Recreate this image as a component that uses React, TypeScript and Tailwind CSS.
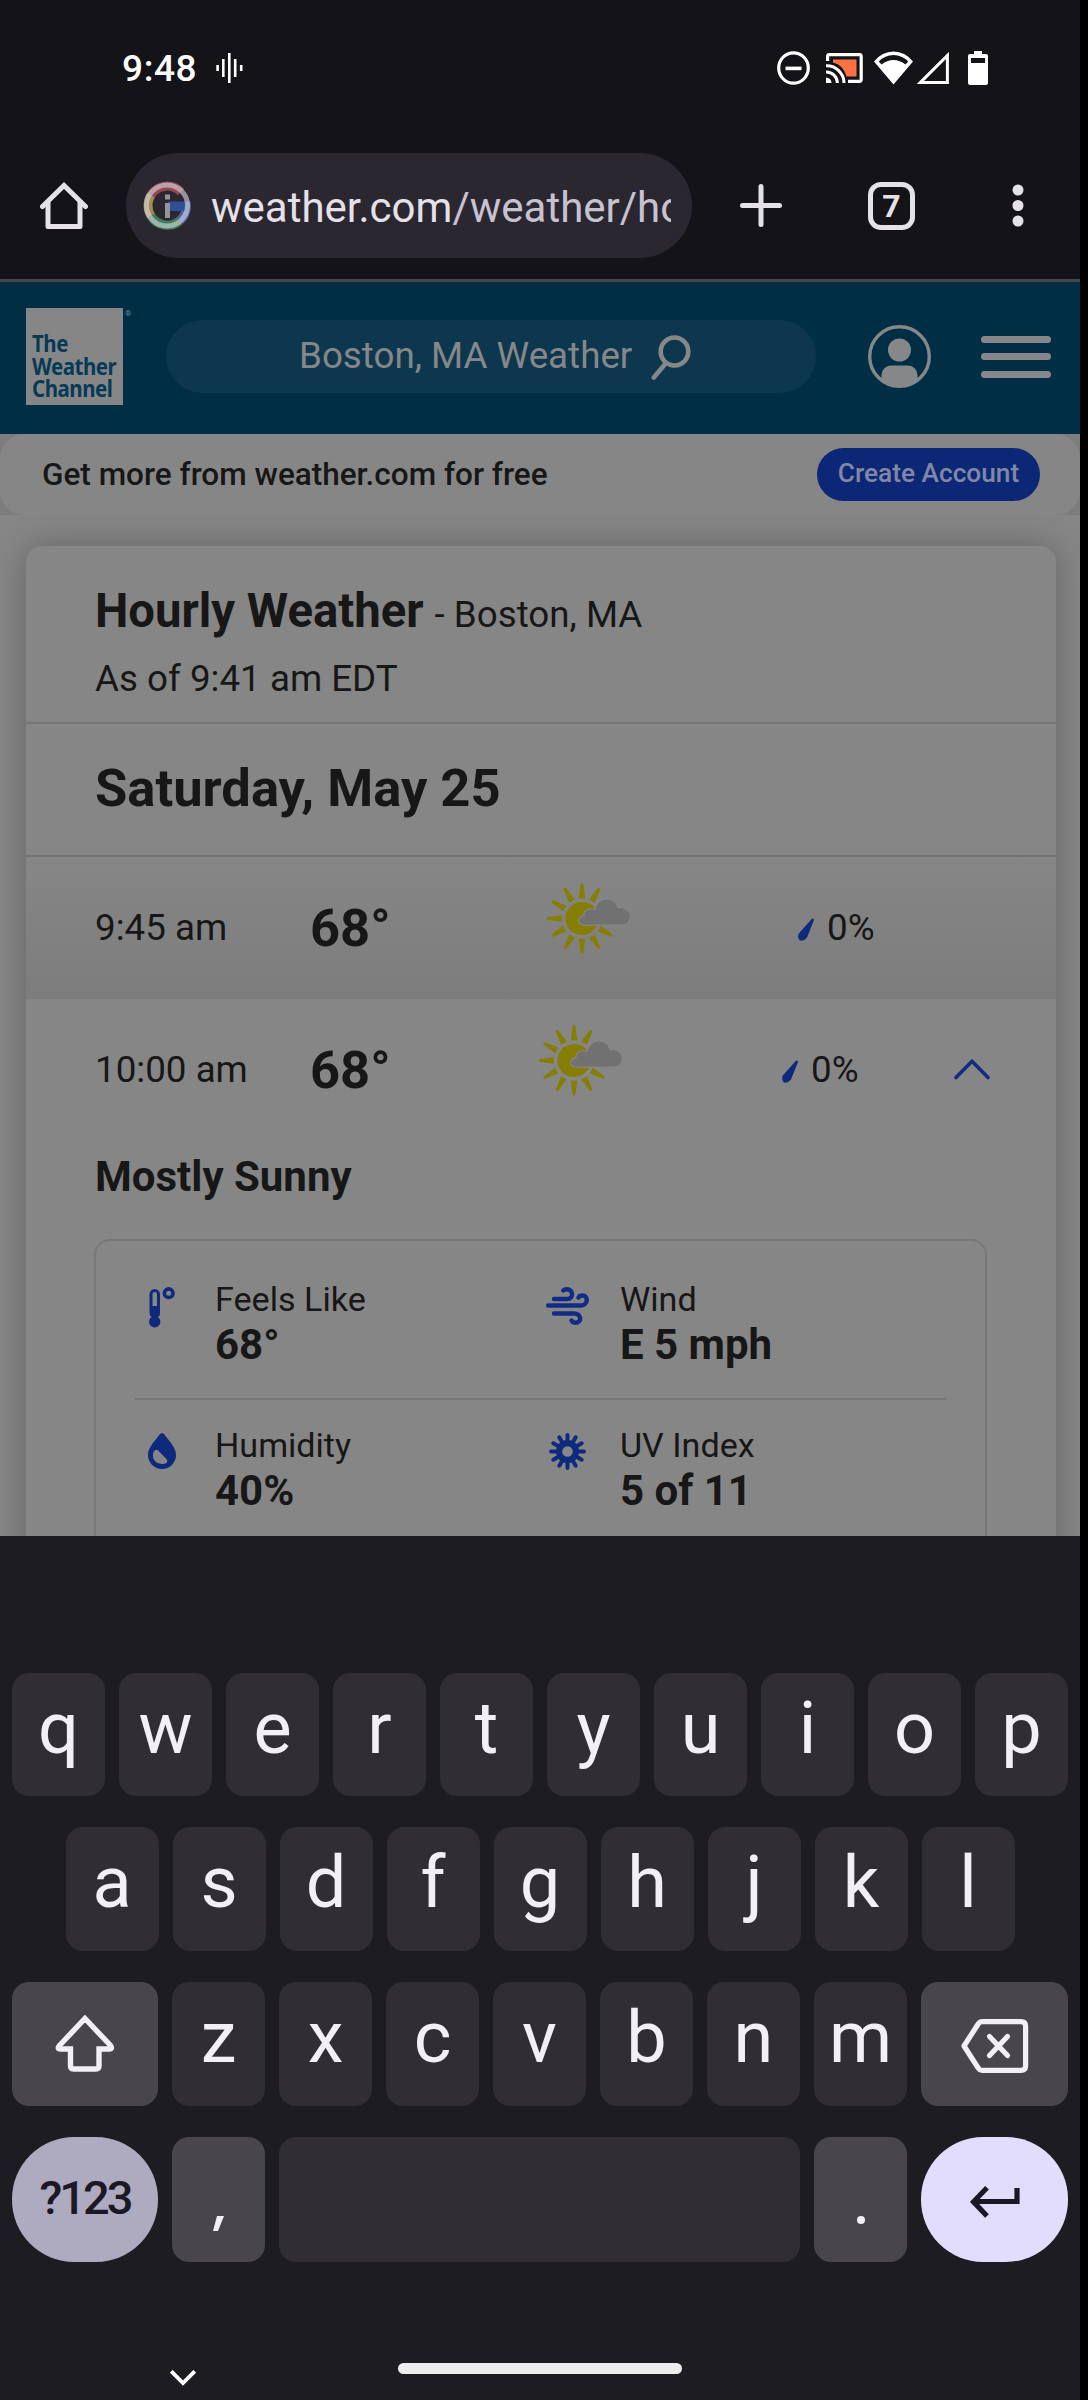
import React from "react";

function StatusBar() {
  return (
    <div className="flex h-[135px] shrink-0 items-center text-white">
      <div className="ml-[122px] w-[94px] pt-[1px] text-[37px] font-medium leading-none tracking-[0.6px]">9:48</div>
      <svg width="27" height="30" viewBox="0 0 27 30" stroke="#fff" strokeWidth="2.6">
        <path d="M1.6 12v6M7.3 6v18M13.3 0v30M19.2 6v18M25.2 12v6" />
      </svg>
      <svg className="ml-[534px]" width="33" height="34" viewBox="0 0 33 34" fill="none" stroke="#fff" strokeWidth="3.2">
        <ellipse cx="16.5" cy="17" rx="14.8" ry="15.2" />
        <path d="M8.5 17.4h16" strokeWidth="3.6" />
      </svg>
      <svg className="ml-[16px]" width="37" height="30" viewBox="0 0 37 30" fill="none">
        <path d="M1.6 8V3.4Q1.6 1.6 3.4 1.6H33.4Q35.2 1.6 35.2 3.4V26.6Q35.2 28.4 33.4 28.4H22" stroke="#fff" strokeWidth="3.2" />
        <path d="M7 6.5H30.5V23.5H20.5Q17.500 12 7 9.500Z" fill="#ff7143" />
        <path d="M0 12.800A17.200 17.200 0 0 1 18 30M0 19A11 11 0 0 1 11.400 30" stroke="#fff" strokeWidth="3" />
        <path d="M0 24.500A5.500 5.500 0 0 1 5.500 30H0Z" fill="#fff" />
      </svg>
      <svg className="ml-[11px]" width="39" height="34" viewBox="0 0 39 34" fill="none">
        <path d="M19.500 33.500L0 10.500Q8 .5 19.500 .5T39 10.500Z" fill="#fff" />
        <path d="M4.800 10.500Q11 4 19.500 4T34.200 10.500L31.500 13.500Q26 9 19.500 9T7.500 13.500Z" fill="#141318" />
      </svg>
      <svg className="ml-[4px]" width="32" height="32" viewBox="0 0 32 32" fill="none">
        <path d="M3.500 30.400L30.400 3.500V30.400Z" stroke="#fff" strokeWidth="3" />
      </svg>
      <svg className="ml-[19px]" width="20" height="34" viewBox="0 0 20 34">
        <path fillRule="evenodd" fill="#fff" d="M6 0h8v3h4q2 0 2 2v27q0 2-2 2H2q-2 0-2-2V5q0-2 2-2h4zM3 7v5h14V7z" />
      </svg>
    </div>
  );
}

function SiteBadge() {
  return (
    <svg width="48" height="50" viewBox="0 0 48 50" fill="none">
      <g strokeWidth="9">
        <path d="M8 14A19.500 20 0 0 1 38 11" stroke="#94474f" />
        <path d="M8 35A19.500 20 0 0 1 8 14" stroke="#a08a52" />
        <path d="M37 39.500A19.500 20 0 0 1 8 35" stroke="#3f7d5b" />
        <path d="M43 21A19.500 20 0 0 1 37 39.500" stroke="#4c66a8" />
      </g>
      <path d="M25 20.500H43V30H25Z" fill="#2f5095" />
      <circle cx="24" cy="24.500" r="20.500" stroke="#d9d6e4" strokeOpacity="0.62" strokeWidth="5" />
      <path d="M22 13.500h5v5h-5zM22 22h5v15h-5z" fill="#96939f" />
    </svg>
  );
}

function Toolbar() {
  return (
    <div className="flex h-[144px] shrink-0 items-center pb-[3px] text-[#e5e1e9]">
      <svg className="ml-[40px]" width="48" height="48" viewBox="0 0 48 48" fill="none" stroke="#e5e1e9" strokeWidth="5" strokeLinejoin="round">
        <path d="M2.500 24.500L24 3.500L45.500 24.500" strokeLinecap="round" strokeLinejoin="miter" />
        <path d="M8 20V44.500H40V20" />
      </svg>
      <div className="ml-[38px] flex h-[105px] w-[566px] items-center rounded-full bg-[#2a2731] pl-[17px]">
        <SiteBadge />
        <div className="ml-[20px] w-[460px] overflow-hidden pt-[4px] text-[42px] leading-[52px] whitespace-nowrap">
          weather.com<span className="text-[#c7c2d0]">/weather/ho</span>
        </div>
      </div>
      <svg className="ml-[48px]" width="42" height="43" viewBox="0 0 42 43" stroke="#e5e1e9" strokeWidth="5" strokeLinecap="round">
        <path d="M2.500 21.500h37M21 2.500v38" />
      </svg>
      <div className="ml-[86px] flex h-[48px] w-[47px] items-center justify-center rounded-[13px] border-[5px] border-[#e5e1e9] text-[32px] font-bold leading-none">7</div>
      <svg className="ml-[97px]" width="12" height="43" viewBox="0 0 12 43" fill="#e5e1e9">
        <circle cx="6" cy="6" r="5.500" />
        <circle cx="6" cy="21.500" r="5.500" />
        <circle cx="6" cy="37" r="5.500" />
      </svg>
    </div>
  );
}

function SiteHeader() {
  return (
    <header className="flex h-[152px] shrink-0 items-center bg-[#002f45] pb-[3px]">
      <div className="ml-[26px] h-[97px] w-[97px] bg-[#868686] pt-[24px] pl-[6px]">
        <div className="flex w-[110px] origin-left scale-x-[0.87] flex-col font-['Noto_Sans'] text-[23.500px] leading-[22.500px] font-bold tracking-[-0.500px] text-[#053a56]">
          <span>The</span>
          <span>Weather</span>
          <span>Channel</span>
        </div>
      </div>
      <div className="mb-[86px] ml-[2px] w-[8px] text-[8px] leading-none text-[#6d8896]">®</div>
      <div className="ml-[33px] flex h-[73px] w-[650px] items-center rounded-full bg-[#0d374f] pl-[133px]">
        <span className="w-[352px] text-[36.750px] leading-none whitespace-nowrap text-[#868788]">Boston, MA Weather</span>
        <svg className="mt-px" width="40" height="45" viewBox="0 0 40 45" fill="none" stroke="#868788" strokeLinecap="round">
          <ellipse cx="23.500" cy="16.500" rx="13.800" ry="14" strokeWidth="4.600" />
          <path d="M15 28L2.800 42.500" strokeWidth="4.600" />
        </svg>
      </div>
      <svg className="ml-[52px]" width="63" height="63" viewBox="0 0 63 63" fill="none">
        <circle cx="31.500" cy="31.500" r="29.800" stroke="#868788" strokeWidth="3.400" />
        <circle cx="31.500" cy="25" r="11.500" fill="#868788" />
        <path d="M13.500 54V50Q14.500 40.500 24 40.500H39Q48.500 40.500 49.500 50V54Q41 62 31.500 62T13.500 54Z" fill="#868788" />
      </svg>
      <div className="ml-[50px] flex w-[70px] flex-col gap-[10.500px]">
        <div className="h-[7px] rounded-full bg-[#868788]" />
        <div className="h-[7px] rounded-full bg-[#868788]" />
        <div className="h-[7px] rounded-full bg-[#868788]" />
      </div>
    </header>
  );
}

function AccountBanner() {
  return (
    <div className="h-[81px] shrink-0 bg-[#7d7d7d]">
      <div className="flex h-full items-center rounded-[24px] bg-[#868686]">
        <span className="ml-[42px] text-[31.500px] leading-none font-medium text-[#171717]">Get more from weather.com for free</span>
        <div className="mr-[40px] ml-auto flex h-[53px] w-[223px] items-center justify-center rounded-full bg-[#0c2776] pb-[3px] text-[26.250px] leading-none font-medium whitespace-nowrap text-[#8088a6]">
          Create Account
        </div>
      </div>
    </div>
  );
}

const RAYS = [0, 30, 120, 150, 180, 210, 240, 270, 300, 330];

function MostlySunny() {
  return (
    <svg width="84" height="71" viewBox="0 0 84 71">
      <g fill="#867e00">
        <circle cx="36" cy="35.500" r="16.600" />
        {RAYS.map((a) => (
          <path key={a} d="M32.800 15.600L34.500 1.500Q36 -.8 37.500 1.500L39.200 15.600Q36 14.900 32.800 15.600Z" transform={`rotate(${a} 36 35.500)`} />
        ))}
      </g>
      <path
        d="M38.500 41.500Q33 41.200 33 37.500Q34.500 33.500 38.500 33Q38 28.500 42 27Q46 25.500 49.500 27.500Q51 16.500 61 16.500Q70 17 71.500 25Q83.500 24.500 83.700 33.500Q83 41.500 75 41.500Z"
        fill="#717171"
        stroke="#868686"
        strokeWidth="2.400"
        paintOrder="stroke"
      />
    </svg>
  );
}

function RainDrop() {
  return (
    <svg width="16" height="23" viewBox="0 0 16 23">
      <path d="M14.500 .5Q16.300 .5 15.800 2.500L9 19.500Q6 23.500 2 22.500Q-1 20 .8 15.500L13.500 1.200Z" fill="#0f2a7d" />
    </svg>
  );
}

function ForecastCard() {
  return (
    <main className="ml-[26px] w-[1030px] rounded-t-[16px] bg-[#868686] text-[#171717] shadow-[0_0_34px_rgba(0,0,0,0.25)]">
      <div className="h-[176px] pt-[41px] pl-[69px]">
        <h1 className="flex items-baseline leading-[48px] whitespace-nowrap">
          <span className="text-[47.250px] font-bold">Hourly Weather</span>
          <span className="ml-[11px] text-[36.750px]">- Boston, MA</span>
        </h1>
        <p className="mt-[17px] text-[36.750px] leading-[46px]">As of 9:41 am EDT</p>
      </div>
      <div className="flex h-[135px] items-center border-y-2 border-[#757575] pb-[2px] pl-[69px]">
        <h2 className="text-[52.500px] leading-none font-bold">Saturday, May 25</h2>
      </div>
      <div className="flex h-[142px] items-center bg-gradient-to-b from-[#868686] to-[#7d7d7d] pl-[69px]">
        <span className="w-[215px] text-[36.750px] leading-none">9:45 am</span>
        <span className="w-[236px] text-[52.500px] leading-none font-bold">68°</span>
        <div className="mb-[19px] w-[252px]"><MostlySunny /></div>
        <div className="mt-[2px]"><RainDrop /></div>
        <span className="ml-[13px] text-[36.750px] leading-none">0%</span>
      </div>
      <div className="flex h-[142px] items-center pl-[69px]">
        <span className="w-[215px] text-[36.750px] leading-none">10:00 am</span>
        <span className="w-[228px] text-[52.500px] leading-none font-bold">68°</span>
        <div className="mb-[19px] w-[244px]"><MostlySunny /></div>
        <div className="mt-[2px]"><RainDrop /></div>
        <span className="ml-[13px] text-[36.750px] leading-none">0%</span>
        <svg className="mr-[66px] mb-[2px] ml-auto" width="36" height="21" viewBox="0 0 36 21" fill="none" stroke="#122c86" strokeWidth="3.600" strokeLinecap="round" strokeLinejoin="round">
          <path d="M2 18.500L18 2.200L34 18.500" />
        </svg>
      </div>
      <h3 className="h-[98px] pt-[10px] pl-[69px] text-[42px] leading-[52px] font-bold">Mostly Sunny</h3>
      <Details />
    </main>
  );
}

function Thermometer() {
  return (
    <svg width="26" height="41" viewBox="0 0 26 41" fill="none">
      <rect x="2" y="3.500" width="7.500" height="26" rx="3.700" stroke="#0f2a7d" strokeWidth="3" />
      <path d="M1 19h9.500v10H1z" fill="#0f2a7d" />
      <circle cx="5.700" cy="34.800" r="5.700" fill="#0f2a7d" />
      <circle cx="19.700" cy="6.200" r="4.300" stroke="#0f2a7d" strokeWidth="3.600" />
    </svg>
  );
}

function WindIcon() {
  return (
    <svg width="43" height="38" viewBox="0 0 43 38" fill="none" stroke="#122c86" strokeWidth="4.400" strokeLinecap="round">
      <path d="M8 12H21C28 12 27.500 2.200 21 2.200Q18.500 2.200 17.200 3.500" />
      <path d="M2.200 18.500H35C42.500 18 42.300 8.500 36.500 8.500Q33.500 8.500 32.500 10.500" />
      <path d="M8 26.500H28C36 26.500 36 35.800 29.500 35.800Q27 35.800 25.500 33.500" />
    </svg>
  );
}

function HumidityIcon() {
  return (
    <svg width="28" height="36" viewBox="0 0 28 36">
      <path d="M14 0Q16 .3 18 3.500C23 10 28 15.500 28 22A14 14 0 0 1 0 22C0 15.500 5 10 10 3.500Q12 .3 14 0Z" fill="#0f2a7d" />
      <path d="M5.800 18.500Q7.500 15.500 10 17.500L18 25.500Q21 28.500 17.500 30.500Q11 32.500 6.800 28Q3.500 23.500 5.800 18.500Z" fill="#868686" />
    </svg>
  );
}

function UvIcon() {
  return (
    <svg width="37" height="37" viewBox="-18.5 -18.5 37 37">
      <g stroke="#0f2a7d" strokeWidth="4" strokeLinecap="round">
        {[0, 30, 60, 90, 120, 150, 180, 210, 240, 270, 300, 330].map((a) => (
          <path key={a} d="M0 -9V-16.400" transform={`rotate(${a})`} />
        ))}
      </g>
      <circle r="8.400" fill="none" stroke="#0f2a7d" strokeWidth="6.200" />
    </svg>
  );
}

function Detail({ icon, label, value }: { icon: React.ReactNode; label: string; value: string }) {
  return (
    <div className="flex w-[405px]">
      <div className="flex w-[80px] justify-center pt-[9px] pr-[26px]">{icon}</div>
      <div className="whitespace-nowrap">
        <div className="text-[34.125px] leading-[42px]">{label}</div>
        <div className="text-[42px] leading-[50px] font-bold">{value}</div>
      </div>
    </div>
  );
}

function Details() {
  return (
    <section className="ml-[68px] h-[400px] w-[893px] rounded-t-[16px] border-2 border-[#787878] px-[39px]">
      <div className="flex h-[159px] border-b-2 border-[#757575] pt-[37px]">
        <Detail icon={<Thermometer />} label="Feels Like" value="68°" />
        <Detail icon={<WindIcon />} label="Wind" value="E 5 mph" />
      </div>
      <div className="flex pt-[24px]">
        <Detail icon={<HumidityIcon />} label="Humidity" value="40%" />
        <Detail icon={<UvIcon />} label="UV Index" value="5 of 11" />
      </div>
    </section>
  );
}

function Letters({ keys }: { keys: string }) {
  return (
    <>
      {keys.split("").map((k) => (
        <div key={k} className="flex w-[93px] shrink-0 items-center justify-center rounded-[17px] bg-[#302e34] pb-[12px] text-[72px] leading-none text-[#f2eff5]">
          {k}
        </div>
      ))}
    </>
  );
}

function Keyboard() {
  return (
    <div className="flex h-[864px] shrink-0 flex-col bg-[#1d1c20] pt-[137px]">
      <div className="flex flex-col gap-[31px] px-[12px]">
        <div className="flex h-[123px] gap-[14px]">
          <Letters keys="qwertyuiop" />
        </div>
        <div className="flex h-[124px] justify-center gap-[14px]">
          <Letters keys="asdfghjkl" />
        </div>
        <div className="flex h-[124px] gap-[14px]">
          <div className="flex w-[146px] shrink-0 items-center justify-center rounded-[17px] bg-[#48464b]">
            <svg width="60" height="58" viewBox="0 0 60 58" fill="none" stroke="#f2eff5" strokeWidth="5.400" strokeLinejoin="round">
              <path d="M30 3.500L55.500 30.500Q58 34 54 34H44V51Q44 54 41 54H18.500Q15.500 54 15.500 51V34H5.500Q1.500 34 4.500 30.500Z" strokeLinejoin="miter" />
            </svg>
          </div>
          <Letters keys="zxcvbnm" />
          <div className="flex w-[147px] shrink-0 items-center justify-center rounded-[17px] bg-[#48464b] pt-[4px]">
            <svg width="68" height="54" viewBox="0 0 68 54" fill="none" stroke="#f2eff5" strokeWidth="5.200" strokeLinejoin="round">
              <path d="M3 27L17.500 4.500Q18.800 2.700 21 2.700H60Q64.600 2.700 64.600 7.300V46.700Q64.600 51.300 60 51.300H21Q18.800 51.300 17.500 49.500Z" />
              <path d="M28.500 17.500L46.500 36.500M46.500 17.500L28.500 36.500" strokeLinecap="round" />
            </svg>
          </div>
        </div>
        <div className="flex h-[125px] gap-[14px]">
          <div className="flex w-[146px] shrink-0 items-center justify-center rounded-[62px] bg-[#aeaac0] pb-[5px] text-[47px] leading-none font-medium tracking-[-3px] text-[#1c1926]">?123</div>
          <div className="flex w-[93px] shrink-0 items-end justify-center rounded-[17px] bg-[#48464b] pb-[31px]">
            <svg width="11" height="15" viewBox="0 0 11 15"><path d="M4 0H11L5 15H0Z" fill="#f2eff5" /></svg>
          </div>
          <div className="w-[521px] shrink-0 rounded-[17px] bg-[#302e34]" />
          <div className="flex w-[93px] shrink-0 items-end justify-center rounded-[17px] bg-[#48464b] pb-[38px]">
            <div className="h-[8px] w-[8px] rounded-full bg-[#f2eff5]" />
          </div>
          <div className="flex w-[147px] shrink-0 items-center justify-center rounded-[62px] bg-[#e3ddfd] pt-[5px]">
            <svg width="50" height="32" viewBox="0 0 50 32" fill="none" stroke="#1c1926" strokeWidth="5.200">
              <path d="M47 2V15.500H4M17 1.800L3.500 15.800L17 30" />
            </svg>
          </div>
        </div>
      </div>
      <div className="mt-[101px] flex items-start">
        <svg className="mt-[7px] ml-[170px]" width="26" height="16" viewBox="0 0 26 16" fill="none" stroke="#fff" strokeWidth="3.800">
          <path d="M1.300 1.300L13 13L24.700 1.300" />
        </svg>
        <div className="ml-[202px] h-[11px] w-[284px] rounded-full bg-[#ededee]" />
      </div>
    </div>
  );
}

export default function App() {
  return (
    <div className="h-[2400px] w-[1088px] overflow-hidden bg-black font-['Roboto',sans-serif]">
      <div className="flex h-full w-[1080px] flex-col overflow-hidden bg-[#141318]">
        <StatusBar />
        <Toolbar />
        <div className="h-[3px] shrink-0 bg-[#46464e]" />
        <SiteHeader />
        <AccountBanner />
        <div className="h-[1021px] shrink-0 overflow-hidden bg-[#868686] pt-[31px]">
          <ForecastCard />
        </div>
        <Keyboard />
      </div>
    </div>
  );
}
